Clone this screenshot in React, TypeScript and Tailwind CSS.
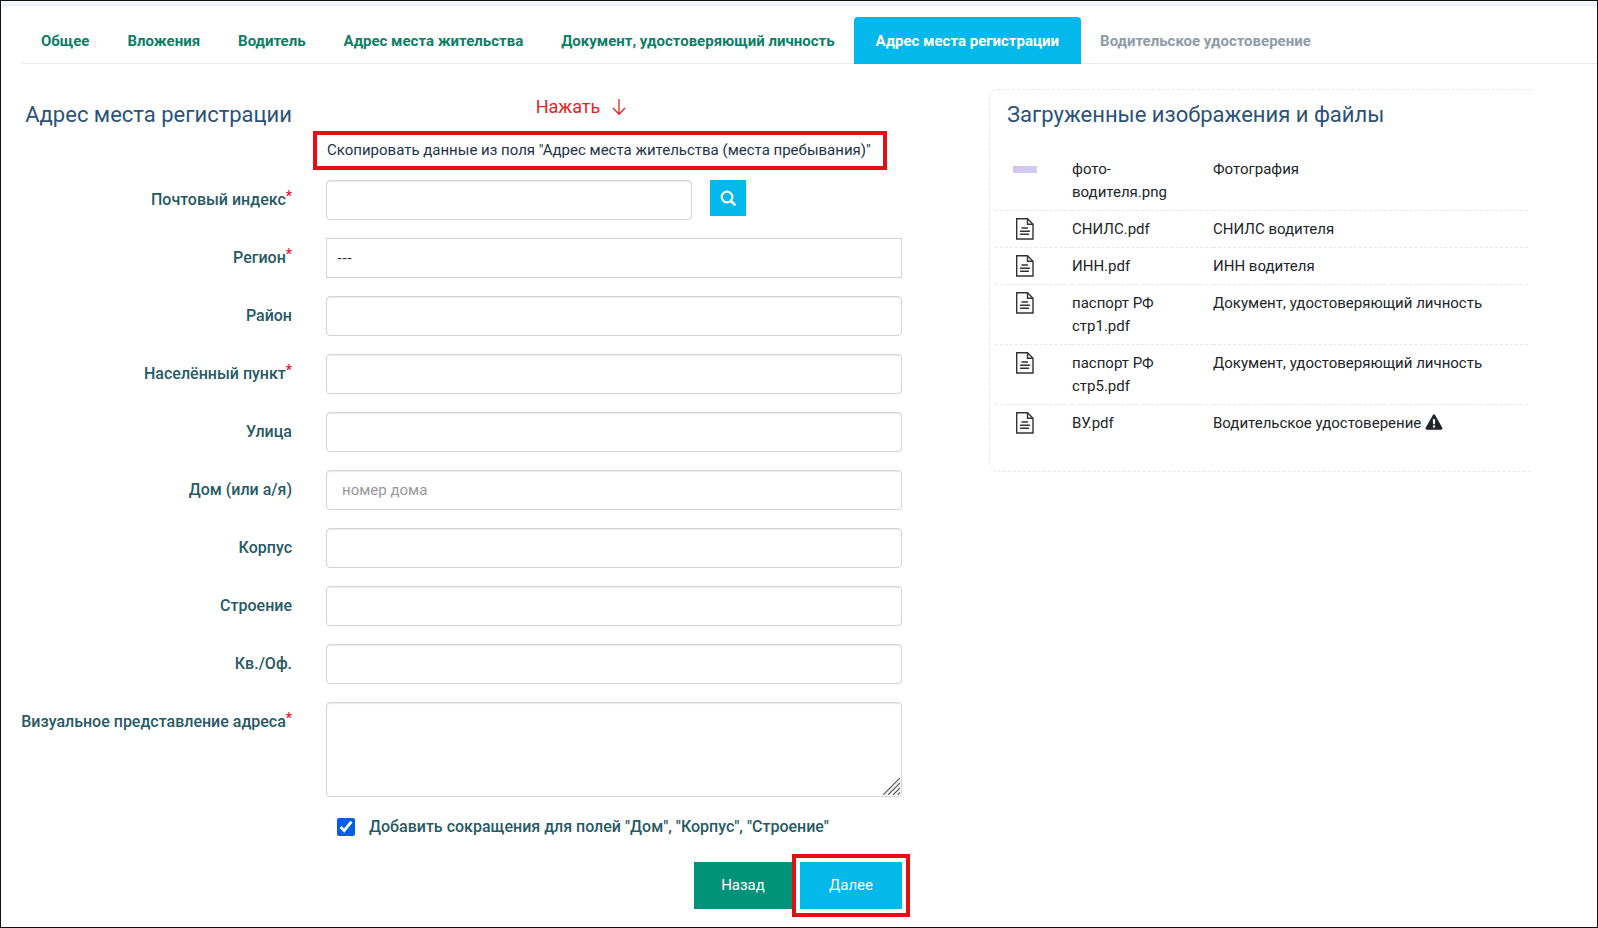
import { useState } from "react";
import type { ReactNode } from "react";

const tabs = [
  "Общее",
  "Вложения",
  "Водитель",
  "Адрес места жительства",
  "Документ, удостоверяющий личность",
];

type Upload = { name: string; kind: string; image?: boolean; warning?: boolean };

const uploads: Upload[] = [
  { name: "фото-водителя.png", kind: "Фотография", image: true },
  { name: "СНИЛС.pdf", kind: "СНИЛС водителя" },
  { name: "ИНН.pdf", kind: "ИНН водителя" },
  { name: "паспорт РФ стр1.pdf", kind: "Документ, удостоверяющий личность" },
  { name: "паспорт РФ стр5.pdf", kind: "Документ, удостоверяющий личность" },
  { name: "ВУ.pdf", kind: "Водительское удостоверение", warning: true },
];

const inputClass =
  "block h-10 w-full rounded border border-[#d4d4d4] bg-white px-[15px] text-[15px] text-[#333] shadow-[inset_0_1px_1px_rgba(0,0,0,0.08)] outline-none placeholder:text-[#999]";

const rowGrid = "grid grid-cols-[minmax(0,270fr)_minmax(0,576fr)] gap-x-[34px]";

function FileIcon() {
  return (
    <svg className="h-6 w-5" viewBox="0 0 20 24" fill="none" stroke="#333" strokeWidth="1.4" aria-hidden="true">
      <path d="M1.7 1.7h10.8l5.5 5.5v14.8H1.7z" />
      <path d="M12.5 1.7v5.5h5.5" />
      <path d="M7 11h5.5M5.5 14.2h9M5.5 17.3h8" strokeLinecap="round" />
    </svg>
  );
}

function SearchIcon() {
  return (
    <svg className="h-4 w-4" viewBox="0 0 16 16" fill="none" stroke="white" aria-hidden="true">
      <circle cx="7" cy="7" r="5.3" strokeWidth="2.2" />
      <path d="M11 11l3.6 3.6" strokeWidth="2.6" strokeLinecap="round" />
    </svg>
  );
}

function WarningIcon() {
  return (
    <svg className="ml-1 inline h-4 w-[18px] align-[-2px]" viewBox="0 0 18 16" aria-label="Внимание">
      <path
        fill="#212529"
        fillRule="evenodd"
        d="M9 .2c.5 0 .9.3 1.1.7l7.2 12.9c.5.9-.1 2-1.1 2H1.8c-1 0-1.6-1.1-1.1-2L7.9.9C8.1.5 8.5.2 9 .2zM7.8 5.2l.3 5h1.8l.3-5zM7.9 11.4v2.1h2.2v-2.1z"
      />
    </svg>
  );
}

function Row({ label, id, required, children }: { label: string; id: string; required?: boolean; children: ReactNode }) {
  return (
    <div className={rowGrid}>
      <label htmlFor={id} className="flex justify-end pt-2 text-base leading-6 font-medium whitespace-nowrap text-[#265a64]">
        {label}
        {required && <span className="text-sm leading-4 text-[#e0142c]">*</span>}
      </label>
      <div>{children}</div>
    </div>
  );
}

function TextRow({ label, id, required, placeholder }: { label: string; id: string; required?: boolean; placeholder?: string }) {
  return (
    <Row label={label} id={id} required={required}>
      <input id={id} type="text" placeholder={placeholder} className={inputClass} />
    </Row>
  );
}

export default function App() {
  const [abbreviate, setAbbreviate] = useState(true);
  return (
    <div className="min-h-screen border border-[#111] bg-white font-['Roboto','Liberation_Sans',sans-serif] text-[15px] text-[#212529]">
      <div className="h-[5px] border-b border-[#e6ebf0] bg-[#f6f7fb]" />
      <nav className="mt-[11px] ml-[21px] flex border-b border-[#e9ecef] text-[15px] font-bold whitespace-nowrap">
        {tabs.map((t) => (
          <a key={t} href="#" className="flex h-[46px] items-center px-[19px] pt-[2px] text-[#0a7f66]">
            {t}
          </a>
        ))}
        <a href="#" aria-current="page" className="-mb-px flex h-[47px] items-center rounded-t bg-[#03b8ea] px-[22px] pt-px text-white">
          Адрес места регистрации
        </a>
        <a href="#" className="flex h-[46px] items-center px-[19px] pt-[2px] text-[#8f9ba7]">
          Водительское удостоверение
        </a>
      </nav>

      <div className="grid grid-cols-[minmax(0,880fr)_minmax(0,543fr)] gap-x-[87px] pr-[65px] pl-[21px]">
        <form className="pb-2" onSubmit={(e) => e.preventDefault()}>
          <div className={rowGrid}>
            <h1 className="pt-[35px] text-right text-[22px] leading-8 whitespace-nowrap text-[#2c5377]">Адрес места регистрации</h1>
            <div className="pt-7">
              <p className="flex items-center justify-center gap-3 pr-[66px] text-lg leading-[30px] text-[#e32326]">
                Нажать
                <svg className="h-5 w-[14px]" viewBox="0 0 14 20" fill="none" stroke="currentColor" strokeWidth="1.3" aria-hidden="true">
                  <path d="M7 2v15M1 11l6 6.2L13 11" />
                </svg>
              </p>
              <button
                type="button"
                className="mt-[9px] -ml-[13px] flex h-[39px] items-center border-4 border-[#e30f12] pr-3 pl-[10px] text-[15px] whitespace-nowrap text-[#1f3347]"
              >
                Скопировать данные из поля "Адрес места жительства (места пребывания)"
              </button>
            </div>
          </div>

          <div className="mt-[10px] flex flex-col gap-[18px]">
            <Row label="Почтовый индекс" id="zip" required>
              <div className="grid grid-cols-[minmax(0,366fr)_minmax(0,192fr)] gap-[18px]">
                <input id="zip" type="text" className={inputClass} />
                <button type="button" aria-label="Найти" className="flex h-9 w-9 items-center justify-center bg-[#03b8ea]">
                  <SearchIcon />
                </button>
              </div>
            </Row>
            <Row label="Регион" id="region" required>
              <select
                id="region"
                className="block h-10 w-full appearance-none border border-[#d4d4d4] bg-white px-[10px] font-['Liberation_Sans',sans-serif] text-[15px] text-[#333]"
              >
                <option>---</option>
              </select>
            </Row>
            <TextRow label="Район" id="district" />
            <TextRow label="Населённый пункт" id="town" required />
            <TextRow label="Улица" id="street" />
            <TextRow label="Дом (или а/я)" id="house" placeholder="номер дома" />
            <TextRow label="Корпус" id="block" />
            <TextRow label="Строение" id="building" />
            <TextRow label="Кв./Оф." id="flat" />
            <Row label="Визуальное представление адреса" id="full" required>
              <div className="relative">
                <textarea
                  id="full"
                  className="block h-[95px] w-full resize-none rounded border border-[#d4d4d4] bg-white px-[15px] py-2 shadow-[inset_0_1px_1px_rgba(0,0,0,0.08)] outline-none"
                />
                <svg className="pointer-events-none absolute right-[2px] bottom-[2px] h-[17px] w-[17px]" viewBox="0 0 17 17" stroke="#555" strokeWidth="1.2" aria-hidden="true">
                  <path d="M0 17L17 0M5 17L17 5M10 17l7-7M14.5 17l2.5-2.5" />
                </svg>
              </div>
            </Row>
          </div>

          <div className={rowGrid}>
            <div className="col-start-2">
              <div className="mt-[18px] flex items-center gap-[14px] pl-[11px]">
                <input
                  id="abbr"
                  type="checkbox"
                  checked={abbreviate}
                  onChange={(e) => setAbbreviate(e.target.checked)}
                  className="h-[18px] w-[18px] accent-[#0060df]"
                />
                <label htmlFor="abbr" className="text-base leading-6 font-medium whitespace-nowrap text-[#265a64]">
                  Добавить сокращения для полей "Дом", "Корпус", "Строение"
                </label>
              </div>
              <div className="-mr-2 mt-[15px] flex items-center justify-end text-[15px] text-white">
                <button type="button" className="h-[47px] w-[98px] bg-[#00937a]">
                  Назад
                </button>
                <div className="border-4 border-[#e30f12] p-1">
                  <button type="submit" className="block h-[47px] w-[102px] bg-[#03b8ea]">
                    Далее
                  </button>
                </div>
              </div>
            </div>
          </div>
        </form>

        <aside className="mt-[25px] self-start rounded-l-lg border border-r-0 border-dashed border-[#e6e9ec] pb-[30px]">
          <h2 className="pt-[9px] pl-[17px] text-[22px] leading-8 whitespace-nowrap text-[#2c5377]">Загруженные изображения и файлы</h2>
          <div className="mt-5 pr-1 pl-[5px]">
            <table className="w-full table-fixed border-collapse text-[15px] leading-[23px] text-[#212529]">
              <colgroup>
                <col className="w-[77px]" />
                <col className="w-[141px]" />
                <col />
              </colgroup>
              <tbody>
                {uploads.map((u) => (
                  <tr key={u.name} className="border-b border-dashed border-[#e6e9ec] align-top last:border-0">
                    <td className="py-[6px] pl-5">
                      {u.image ? (
                        <div className="mt-[9px] -ml-[2px] h-[7px] w-6 bg-linear-to-br from-[#e6b8e6] via-[#cfcbf5] to-[#ccccf6]" />
                      ) : (
                        <FileIcon />
                      )}
                    </td>
                    <td className="pt-[7px] pr-8 pb-[6px]">{u.name}</td>
                    <td className="pt-[7px] pb-[6px] whitespace-nowrap">
                      {u.kind}
                      {u.warning && <WarningIcon />}
                    </td>
                  </tr>
                ))}
              </tbody>
            </table>
          </div>
        </aside>
      </div>
    </div>
  );
}
